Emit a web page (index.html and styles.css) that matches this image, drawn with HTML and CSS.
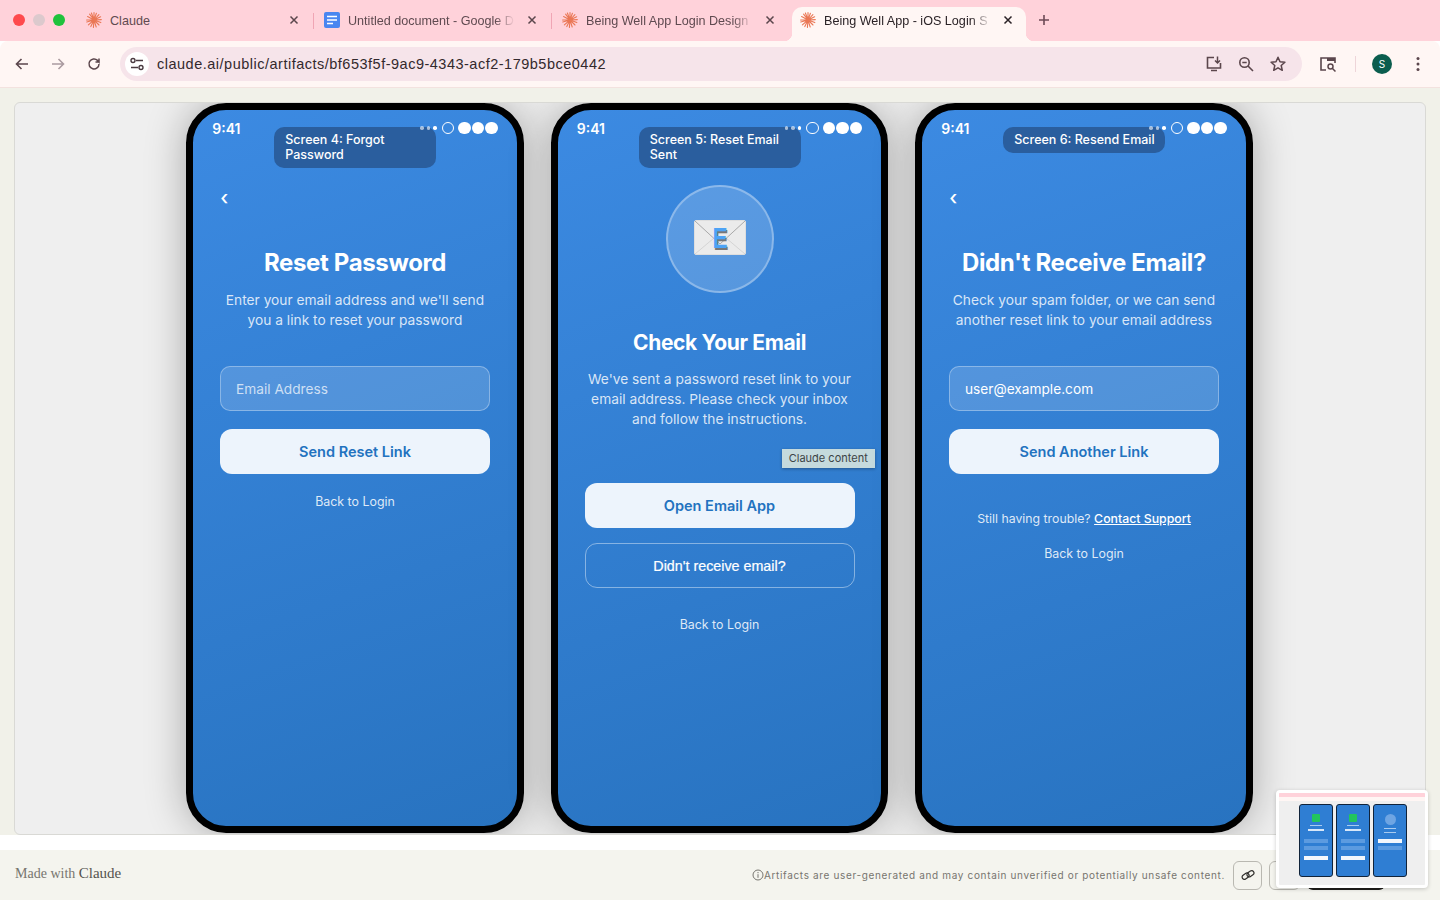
FILE: index.html
```html
<!DOCTYPE html>
<html lang="en">
<head>
    <meta charset="UTF-8">
    <meta name="viewport" content="width=device-width, initial-scale=1.0">
    <title>Being Well App - iOS Login Screens</title>
    <link rel="stylesheet" href="styles.css">
</head>
<body>
    <svg class="sprite" width="0" height="0">
        <symbol id="burst" viewBox="0 0 16 16">
            <path d="M8 8V.6M8 8l2.4-6.8M8 8l4.9-5.4M8 8l6.6-3.2M8 8l7.3-.4M8 8l6.8 2.6M8 8l5 5M8 8l2.2 7M8 8l-.6 7.4M8 8l-3.2 6.6M8 8l-5.6 4.8M8 8l-7.2 2M8 8H.6M8 8L1.6 4.6M8 8L3.6 2.2M8 8L5.4 1" fill="none" stroke="#ea7755" stroke-width="1.1" stroke-linecap="round"/>
        </symbol>
        <symbol id="close" viewBox="0 0 10 10">
            <path d="M1.5 1.5l7 7M8.5 1.5l-7 7" fill="none" stroke="currentColor" stroke-width="1.5"/>
        </symbol>
    </svg>

    <!-- Tabs -->
    <div class="tabstrip">
        <div class="traffic">
            <span class="light red"></span>
            <span class="light grey"></span>
            <span class="light green"></span>
        </div>
        <div class="tab">
            <svg class="tab-icon"><use href="#burst"/></svg>
            <span class="tab-title">Claude</span>
            <svg class="tab-close"><use href="#close"/></svg>
        </div>
        <div class="tab sep">
            <svg class="tab-icon" viewBox="0 0 16 16">
                <rect width="16" height="16" rx="2" fill="#4a86f0"/>
                <path d="M3 4.5h10M3 8h10M3 11.500h6" stroke="#fff" stroke-width="1.6"/>
            </svg>
            <span class="tab-title fade">Untitled document - Google D</span>
            <svg class="tab-close"><use href="#close"/></svg>
        </div>
        <div class="tab sep">
            <svg class="tab-icon"><use href="#burst"/></svg>
            <span class="tab-title fade">Being Well App Login Design</span>
            <svg class="tab-close"><use href="#close"/></svg>
        </div>
        <div class="tab active">
            <svg class="tab-icon"><use href="#burst"/></svg>
            <span class="tab-title fade">Being Well App - iOS Login S</span>
            <svg class="tab-close"><use href="#close"/></svg>
        </div>
        <svg class="new-tab" viewBox="0 0 12 12"><path d="M6 1v10M1 6h10" stroke="#6d4a55" stroke-width="1.6"/></svg>
    </div>

    <!-- Address bar -->
    <div class="toolbar">
        <svg class="tool" viewBox="0 0 16 16"><path d="M14 8H3M7.500 3L2.500 8l5 5" fill="none" stroke="#5b464c" stroke-width="1.6"/></svg>
        <svg class="tool" viewBox="0 0 16 16"><path d="M2 8h11M8.500 3l5 5-5 5" fill="none" stroke="#ab9ba0" stroke-width="1.6"/></svg>
        <svg class="tool" viewBox="0 0 16 16"><path d="M13 8a5 5 0 1 1-1.500-3.600L13 6V2.500M13 6H9.500" fill="none" stroke="#5b464c" stroke-width="1.5"/></svg>
        <div class="address">
            <span class="site-info">
                <svg width="16" height="16" viewBox="0 0 16 16"><path d="M7 4.500h7M2 11.500h7" stroke="#4a3a40" stroke-width="1.400"/><circle cx="4" cy="4.500" r="2" fill="none" stroke="#4a3a40" stroke-width="1.400"/><circle cx="12" cy="11.500" r="2" fill="none" stroke="#4a3a40" stroke-width="1.400"/></svg>
            </span>
            <span class="url">claude.ai/public/artifacts/bf653f5f-9ac9-4343-acf2-179b5bce0442</span>
            <svg class="pill-icon" viewBox="0 0 18 18"><path d="M9 2.500H2.500v10.500h13V8M6 15.500h6" fill="none" stroke="#5b464c" stroke-width="1.600"/><path d="M12.500 1.500v6M10 5.500l2.500 2.500L15 5.500" fill="none" stroke="#5b464c" stroke-width="1.500"/></svg>
            <svg class="pill-icon" viewBox="0 0 18 18"><circle cx="7.500" cy="7.500" r="4.700" fill="none" stroke="#5b464c" stroke-width="1.600"/><path d="M11 11l5 5M5.300 7.500h4.400" stroke="#5b464c" stroke-width="1.600"/></svg>
            <svg class="pill-icon" viewBox="0 0 18 18"><path d="M9 2.300l2 4.500 4.900.5-3.700 3.200 1.100 4.800L9 12.800l-4.300 2.500 1.100-4.800-3.700-3.200 4.900-.5z" fill="none" stroke="#5b464c" stroke-width="1.500" stroke-linejoin="round"/></svg>
        </div>
        <svg class="tool search-tabs" viewBox="0 0 18 18"><path d="M7 15H2V3h14v5" fill="none" stroke="#5b464c" stroke-width="1.600"/><path d="M8 3h8v3H8z" fill="#5b464c"/><circle cx="11.500" cy="11.500" r="2.500" fill="none" stroke="#5b464c" stroke-width="1.500"/><path d="M13.500 13.500l3 3" stroke="#5b464c" stroke-width="1.500"/></svg>
        <span class="tool-sep"></span>
        <span class="avatar">S</span>
        <svg class="menu-dots" viewBox="0 0 4 16"><circle cx="2" cy="2.500" r="1.500"/><circle cx="2" cy="8" r="1.500"/><circle cx="2" cy="13.500" r="1.500"/></svg>
    </div>

    <!-- Artifact -->
    <main class="content">
        <div class="frame">
            <section class="phone">
                <div class="status">
                    <span class="time">9:41</span>
                    <span class="signal"><i></i><i></i><i></i><b class="ring"></b><b></b><b></b><b></b></span>
                </div>
                <div class="screen-label">Screen 4: Forgot Password</div>
                <div class="screen">
                    <div class="back-arrow">‹</div>
                    <h2 class="title t-first">Reset Password</h2>
                    <p class="sub s-first">Enter your email address and we'll send you a link to reset your password</p>
                    <input class="field" type="text" placeholder="Email Address">
                    <button class="btn btn-solid btn-after-field">Send Reset Link</button>
                    <a class="back-link back-a">Back to Login</a>
                </div>
            </section>

            <section class="phone">
                <div class="status">
                    <span class="time">9:41</span>
                    <span class="signal"><i></i><i></i><i></i><b class="ring"></b><b></b><b></b><b></b></span>
                </div>
                <div class="screen-label">Screen 5: Reset Email Sent</div>
                <div class="screen">
                    <div class="mail-circle">
                        <svg class="mail-icon" width="52" height="35" viewBox="0 0 52 35">
                            <rect x="0.500" y="0.500" width="51" height="34" rx="1.500" fill="#ebebeb" stroke="#dedede"/>
                            <path d="M1 34l19-16M51 34L32 18" stroke="#d4d4d4" stroke-width="1" fill="none"/>
                            <path d="M1 1l25 23L51 1" stroke="#a9a9a9" stroke-width="1" fill="none"/>
                            <text x="27" y="29.500" text-anchor="middle" textLength="15" lengthAdjust="spacingAndGlyphs" class="mail-e mail-e-shadow">E</text>
                            <text x="26" y="28" text-anchor="middle" textLength="15" lengthAdjust="spacingAndGlyphs" class="mail-e">E</text>
                        </svg>
                    </div>
                    <h2 class="title t-mail">Check Your Email</h2>
                    <p class="sub s-mail">We've sent a password reset link to your email address. Please check your inbox and follow the instructions.</p>
                    <button class="btn btn-solid btn-after-mail">Open Email App</button>
                    <button class="btn btn-outline">Didn't receive email?</button>
                    <a class="back-link back-b">Back to Login</a>
                </div>
                <div class="tooltip">Claude content</div>
            </section>

            <section class="phone">
                <div class="status">
                    <span class="time">9:41</span>
                    <span class="signal"><i></i><i></i><i></i><b class="ring"></b><b></b><b></b><b></b></span>
                </div>
                <div class="screen-label">Screen 6: Resend Email</div>
                <div class="screen">
                    <div class="back-arrow">‹</div>
                    <h2 class="title t-first">Didn't Receive Email?</h2>
                    <p class="sub s-first">Check your spam folder, or we can send another reset link to your email address</p>
                    <input class="field" type="text" value="user@example.com">
                    <button class="btn btn-solid btn-after-field">Send Another Link</button>
                    <p class="trouble">Still having trouble? <a>Contact Support</a></p>
                    <a class="back-link back-c">Back to Login</a>
                </div>
            </section>
        </div>
    </main>

    <div class="strip"></div>

    <footer class="footer">
        <span class="made">Made with <strong>Claude</strong></span>
        <span class="disclaimer">
            <svg width="12" height="12" viewBox="0 0 12 12"><circle cx="6" cy="6" r="5" fill="none" stroke="#77756f"/><path d="M6 5.200v3.600M6 3v1.200" stroke="#77756f"/></svg>
            Artifacts are user-generated and may contain unverified or potentially unsafe content.
        </span>
        <span class="foot-btn">
            <svg width="14" height="14" viewBox="0 0 14 14"><g fill="none" stroke="#2e2d2a" stroke-width="1.200"><rect x="0.800" y="6" width="7.500" height="4.500" rx="2.250" transform="rotate(-35 4.500 8.200)"/><rect x="5.700" y="3.500" width="7.500" height="4.500" rx="2.250" transform="rotate(-35 9.500 5.800)"/></g></svg>
        </span>
        <span class="foot-btn"></span>
        <span class="foot-dark"></span>
    </footer>

    <!-- Screenshot preview -->
    <div class="thumb">
        <div class="thumb-tabs"></div>
        <div class="thumb-bar"></div>
        <div class="thumb-phones">
            <div class="mini"><span class="mini-green"></span><span class="mini-h"></span><span class="mini-h wide"></span><span class="mini-in first"></span><span class="mini-in"></span><span class="mini-btn"></span></div>
            <div class="mini"><span class="mini-green"></span><span class="mini-h"></span><span class="mini-h wide"></span><span class="mini-in first"></span><span class="mini-in"></span><span class="mini-btn"></span></div>
            <div class="mini"><span class="mini-round"></span><span class="mini-h"></span><span class="mini-h"></span><span class="mini-btn"></span><span class="mini-in"></span></div>
        </div>
    </div>
</body>
</html>
```

FILE: styles.css
```css
* {
    box-sizing: border-box;
}

html, body {
    margin: 0;
    padding: 0;
    height: 900px;
    overflow: hidden;
}

body {
    display: flex;
    flex-direction: column;
    font-family: Inter, "Liberation Sans", sans-serif;
    background-color: #fff;
    position: relative;
}

.sprite {
    position: absolute;
}

/* Tabs */
.tabstrip {
    height: 41px;
    flex: none;
    display: flex;
    align-items: flex-end;
    background-color: #ffd2da;
    font-family: "Liberation Sans", Arial, sans-serif;
}

.traffic {
    width: 78px;
    height: 41px;
    padding: 14px 0 0 13px;
    display: flex;
    gap: 8px;
    flex: none;
}

.light {
    width: 12px;
    height: 12px;
    border-radius: 50%;
}

.red { background-color: #fe4a4d; }
.grey { background-color: #dcc9cd; }
.green { background-color: #1fc23c; }

.tab {
    width: 234px;
    height: 34px;
    margin-right: 4px;
    padding: 0 13px 8px 8px;
    display: flex;
    align-items: center;
    gap: 8px;
    position: relative;
    font-size: 12.600px;
    color: #5f4a50;
    flex: none;
}

.sep::before {
    content: "";
    position: absolute;
    left: -3px;
    top: 6px;
    width: 1px;
    height: 16px;
    background-color: #f0a5b4;
}

.tab-icon {
    width: 16px;
    height: 16px;
    flex: none;
}

.tab-title {
    flex: 1;
    padding-top: 1px;
    white-space: nowrap;
    overflow: hidden;
}

.fade {
    -webkit-mask-image: linear-gradient(to right, #000 88%, transparent 100%);
    mask-image: linear-gradient(to right, #000 88%, transparent 100%);
}

.tab-close {
    width: 10px;
    height: 10px;
    margin-left: 4px;
    flex: none;
    color: #5b464c;
}

.tab.active {
    background-color: #fff6f4;
    border-radius: 10px 10px 0 0;
    color: #2a2226;
}

.tab.active .tab-close {
    color: #2a2226;
}

.tab.active::before,
.tab.active::after {
    content: "";
    position: absolute;
    bottom: 0;
    width: 8px;
    height: 8px;
}

.tab.active::before {
    left: -8px;
    background: radial-gradient(circle at 0 0, transparent 8px, #fff6f4 8.500px);
}

.tab.active::after {
    right: -8px;
    background: radial-gradient(circle at 100% 0, transparent 8px, #fff6f4 8.500px);
}

.new-tab {
    width: 12px;
    height: 12px;
    margin: 0 0 15px 8px;
}

/* Address bar */
.toolbar {
    height: 47px;
    padding-bottom: 1px;
    flex: none;
    display: flex;
    align-items: center;
    padding-left: 14px;
    background-color: #fff6f4;
    border-bottom: 1px solid #f3e2df;
    border-radius: 8px 8px 0 0;
}

.tool {
    width: 16px;
    height: 16px;
    margin-right: 20px;
    flex: none;
}

.toolbar .tool:nth-of-type(3) {
    margin-right: 18px;
}

.address {
    width: 1182px;
    height: 34px;
    padding: 0 15px 0 5px;
    margin-right: 17px;
    display: flex;
    align-items: center;
    border-radius: 17px;
    background-color: #f6e4ea;
    flex: none;
}

.site-info {
    width: 24px;
    height: 24px;
    border-radius: 50%;
    background-color: #fff;
    display: flex;
    align-items: center;
    justify-content: center;
    flex: none;
}

.url {
    flex: 1;
    margin-left: 8px;
    font-family: "Liberation Sans", Arial, sans-serif;
    font-size: 14.500px;
    letter-spacing: 0.5px;
    color: #33292d;
}

.pill-icon {
    width: 18px;
    height: 18px;
    margin-left: 14px;
    flex: none;
}

.search-tabs {
    width: 18px;
    height: 18px;
    margin-right: 0;
}

.tool-sep {
    width: 1px;
    height: 16px;
    margin: 0 16px 0 18px;
    background-color: #eed5d9;
}

.avatar {
    width: 20px;
    height: 20px;
    border-radius: 50%;
    background-color: #0b5d4e;
    color: #fff;
    font-size: 10px;
    display: flex;
    align-items: center;
    justify-content: center;
    flex: none;
}

.menu-dots {
    width: 4px;
    height: 16px;
    margin-left: 24px;
    fill: #5b464c;
    flex: none;
}

/* Artifact area */
.content {
    height: 747px;
    flex: none;
    padding: 14px 14px 0;
    background-color: #f1f1e9;
}

.frame {
    height: 733px;
    padding-right: 1px;
    display: flex;
    justify-content: center;
    gap: 27px;
    background-color: #efefef;
    border: 1px solid #d9d9d5;
    border-radius: 6px 6px 0 6px;
    overflow: hidden;
}

.phone {
    width: 337.500px;
    height: 730px;
    border: 7px solid #000;
    border-radius: 40px;
    background: linear-gradient(160deg, #3c8ae2 0%, #2873c0 100%);
    box-shadow: 0 0 40px rgba(0, 0, 0, 0.3);
    color: #fff;
    position: relative;
    flex: none;
}

.status {
    height: 36px;
    padding: 0 19px;
    display: flex;
    align-items: center;
    justify-content: space-between;
    position: relative;
    z-index: 2;
}

.time {
    font-size: 14px;
    font-weight: 600;
}

.signal {
    display: flex;
    align-items: center;
    gap: 1px;
}

.signal i {
    width: 3.500px;
    height: 3.500px;
    margin-right: 2px;
    border-radius: 50%;
    background-color: rgba(255, 255, 255, 0.6);
}

.signal i:nth-child(3) {
    background-color: #fff;
}

.signal b {
    width: 12.500px;
    height: 12.500px;
    border-radius: 50%;
    background-color: #fff;
}

.signal .ring {
    margin: 0 3px 0 2px;
    background-color: transparent;
    border: 1px solid #fff;
}

.screen-label {
    position: absolute;
    top: 17px;
    left: 81px;
    width: 162px;
    padding: 5px 8px 6px 11px;
    border-radius: 10px;
    background-color: #2a5e9e;
    font-size: 12.500px;
    line-height: 15px;
    font-weight: 500;
}

.screen {
    padding: 0 27px;
    display: flex;
    flex-direction: column;
    align-items: center;
}

.back-arrow {
    align-self: flex-start;
    height: 24px;
    margin-top: 41px;
    font-size: 20px;
    line-height: 23px;
    font-weight: 500;
}

.title {
    margin: 0;
    font-size: 24px;
    line-height: 30px;
    font-weight: 700;
    letter-spacing: -0.35px;
    white-space: nowrap;
}

.t-first { margin-top: 37px; }
.t-mail { margin-top: 35px; font-size: 21px; }

.sub {
    margin: 0;
    width: 270px;
    font-size: 13.750px;
    line-height: 20px;
    text-align: center;
    color: rgba(255, 255, 255, 0.82);
}

.s-first { margin-top: 12px; }
.s-mail { margin-top: 11px; }

.field {
    display: block;
    width: 270px;
    height: 45px;
    margin-top: 36px;
    padding: 0 15px;
    border: 1px solid rgba(255, 255, 255, 0.32);
    border-radius: 10px;
    background-color: rgba(255, 255, 255, 0.15);
    font-family: inherit;
    font-size: 13.700px;
    color: #fff;
}

.field::placeholder {
    color: rgba(255, 255, 255, 0.72);
}

.btn {
    display: block;
    width: 270px;
    height: 45px;
    border-radius: 12px;
    font-family: inherit;
    font-size: 14.500px;
    font-weight: 600;
}

.btn-solid {
    border: none;
    background-color: #edf4fc;
    color: #2272bf;
}

.btn-outline {
    margin-top: 15px;
    border: 1px solid rgba(255, 255, 255, 0.42);
    background-color: transparent;
    color: #fff;
    font-family: "Liberation Sans", Arial, sans-serif;
    font-size: 14.300px;
    font-weight: 400;
    -webkit-text-stroke: 0.2px #fff;
}

.btn-after-field { margin-top: 18px; }
.btn-after-mail { margin-top: 54px; }

.back-link {
    display: block;
    font-size: 12.400px;
    line-height: 16px;
    color: rgba(255, 255, 255, 0.85);
}

.back-a { margin-top: 20px; }
.back-b { margin-top: 29px; }
.back-c { margin-top: 19px; }

.trouble {
    margin: 37px 0 0;
    font-size: 12.300px;
    line-height: 16px;
    color: rgba(255, 255, 255, 0.85);
}

.trouble a {
    color: #fff;
    font-weight: 500;
    text-decoration: underline;
}

.mail-circle {
    width: 108px;
    height: 108px;
    margin-top: 39px;
    border: 2px solid rgba(255, 255, 255, 0.3);
    border-radius: 50%;
    background-color: rgba(255, 255, 255, 0.17);
    display: flex;
    align-items: center;
    justify-content: center;
}

.mail-icon {
    margin-bottom: 3px;
}

.mail-e {
    font-family: "Liberation Sans", Arial, sans-serif;
    font-size: 29px;
    font-weight: 700;
    fill: #4da3f5;
}

.mail-e-shadow {
    fill: #777;
}

.tooltip {
    position: absolute;
    top: 339px;
    left: 224px;
    width: 93px;
    height: 19px;
    background-color: #c5dadd;
    color: #3c4446;
    font-size: 11px;
    line-height: 19px;
    text-align: center;
    box-shadow: 0 1px 3px rgba(0, 0, 0, 0.3);
}

/* Footer */
.strip {
    height: 15px;
    flex: none;
    background-color: #fff;
}

.footer {
    height: 50px;
    flex: none;
    padding: 0 55px 0 15px;
    display: flex;
    align-items: center;
    gap: 7px;
    background-color: #f4f4ee;
}

.made {
    flex: 1;
    padding-bottom: 3px;
    font-family: "Liberation Serif", serif;
    font-size: 14px;
    color: #77756f;
}

.made strong {
    font-weight: 400;
    font-size: 15px;
    color: #55534e;
}

.disclaimer {
    margin-right: 1px;
    display: flex;
    align-items: center;
    font-size: 10px;
    letter-spacing: 0.650px;
    color: #77756f;
}

.disclaimer svg {
    flex: none;
}

.foot-btn {
    width: 29px;
    height: 29px;
    border: 1px solid #b9b8b1;
    border-radius: 6px;
    display: flex;
    align-items: center;
    justify-content: center;
}

.foot-btn + .foot-btn {
    width: 31px;
}

.foot-dark {
    width: 78px;
    height: 29px;
    border-radius: 6px;
    background-color: #1f1e1b;
}

/* Screenshot preview */
.thumb {
    position: absolute;
    left: 1276px;
    top: 790px;
    width: 152px;
    height: 98px;
    border: 3px solid #fff;
    border-radius: 4px;
    background-color: #efefef;
    box-shadow: 0 1px 4px rgba(0, 0, 0, 0.2);
    overflow: hidden;
}

.thumb-tabs {
    height: 4px;
    background-color: #ffd2da;
}

.thumb-bar {
    height: 4px;
    background-color: #fff6f4;
}

.thumb-phones {
    padding-left: 20px;
    display: flex;
    gap: 3px;
    filter: blur(0.4px);
}

.mini {
    width: 34px;
    height: 73px;
    margin-top: 3px;
    padding: 9px 4px 0;
    border: 1px solid #10233a;
    border-radius: 3px;
    background-color: #2f7ed3;
    display: flex;
    flex-direction: column;
    align-items: center;
    gap: 3px;
}

.mini-green {
    width: 8px;
    height: 8px;
    background-color: #22c55e;
    border-radius: 1px;
}

.mini-round {
    width: 11px;
    height: 11px;
    border-radius: 50%;
    background-color: #6ea5e3;
}

.mini-h {
    width: 12px;
    height: 1px;
    background-color: #a9cbef;
}

.mini-h.wide {
    width: 16px;
    height: 2px;
    background-color: #d8e7f8;
}

.mini-in {
    width: 100%;
    height: 4px;
    background-color: #5c9be0;
}

.mini-in.first {
    margin-top: 5px;
}

.mini-btn {
    width: 100%;
    height: 4px;
    margin-top: 3px;
    background-color: #f3f7fc;
}
```
